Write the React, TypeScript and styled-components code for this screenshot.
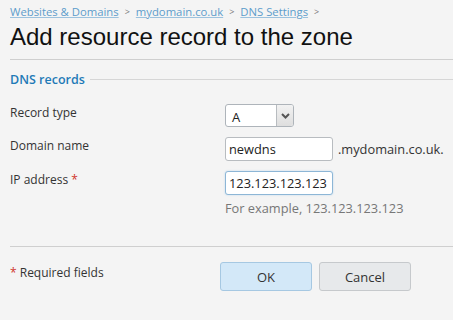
import styled, { createGlobalStyle } from "styled-components";

const GlobalStyle = createGlobalStyle`
  html, body {
    margin: 0;
    padding: 0;
    background: #f4f4f4;
  }
  body {
    font-family: "Open Sans", "Noto Sans", sans-serif;
    font-size: 12px;
    color: #333;
  }
`;

function App() {
  return (
    <>
      <GlobalStyle />
      <Page>
        <Breadcrumbs>
          <Crumb href="#">Websites &amp; Domains</Crumb>
          <Sep>&gt;</Sep>
          <Crumb href="#">mydomain.co.uk</Crumb>
          <Sep>&gt;</Sep>
          <Crumb href="#">DNS Settings</Crumb>
          <Sep>&gt;</Sep>
        </Breadcrumbs>
        <Title>Add resource record to the zone</Title>
        <Section>
          <Legend>DNS records</Legend>
          <Form>
            <Label>Record type</Label>
            <Field>
              <Select>
                <SelectValue>A</SelectValue>
                <SelectArrow>
                  <svg width="9" height="6" viewBox="0 0 9 6">
                    <path d="M1 1l3.5 3.5L8 1" fill="none" stroke="#555" strokeWidth="2" />
                  </svg>
                </SelectArrow>
              </Select>
            </Field>
            <Label>Domain name</Label>
            <Field>
              <Input defaultValue="newdns" />
              <Suffix>.mydomain.co.uk.</Suffix>
            </Field>
            <Label>
              IP address <Req>*</Req>
            </Label>
            <Field $column>
              <Input $focused defaultValue="123.123.123.123" />
              <Hint>For example, 123.123.123.123</Hint>
            </Field>
          </Form>
        </Section>
        <Footer>
          <Required>
            <Req>*</Req> Required fields
          </Required>
          <Buttons>
            <Button $primary>OK</Button>
            <Button>Cancel</Button>
          </Buttons>
        </Footer>
      </Page>
    </>
  );
}

export default App;

const Page = styled.div`
  width: 453px;
  height: 320px;
  padding-left: 10px;
  box-sizing: border-box;
  overflow: hidden;
`;

const Breadcrumbs = styled.div`
  display: flex;
  align-items: center;
  gap: 6px;
  padding-top: 3px;
  height: 16px;
  font-size: 11.3px;
`;

const Crumb = styled.a`
  color: #5d9ccb;
  text-decoration: underline;
  text-decoration-color: #9cc2de;
`;

const Sep = styled.span`
  color: #777;
  font-size: 9px;
`;

const Title = styled.h1`
  margin: 3px 0 0;
  padding-bottom: 7px;
  font-family: "Liberation Sans", Arial, sans-serif;
  font-weight: normal;
  font-size: 24px;
  line-height: 30px;
  color: #111;
  border-bottom: 1px solid #cfcfcf;
`;

const Section = styled.div`
  padding-top: 11px;
`;

const Legend = styled.div`
  display: flex;
  align-items: center;
  gap: 5px;
  font-size: 12.5px;
  font-weight: 600;
  color: #1f7ab7;
  &::after {
    content: "";
    flex: 1;
    border-top: 1px solid #d6d6d6;
  }
`;

const Form = styled.div`
  display: grid;
  grid-template-columns: 215px 1fr;
  row-gap: 10px;
  padding-top: 16px;
  padding-bottom: 29px;
`;

const Label = styled.div`
  padding-top: 1px;
  color: #333;
  line-height: 16px;
`;

const Field = styled.div<{ $column?: boolean }>`
  display: flex;
  flex-direction: ${(p) => (p.$column ? "column" : "row")};
  align-items: ${(p) => (p.$column ? "flex-start" : "center")};
  gap: ${(p) => (p.$column ? "4px" : "5px")};
  font-size: 12.8px;
`;

const Select = styled.div`
  display: flex;
  width: 69px;
  height: 23px;
  box-sizing: border-box;
  border: 1px solid #aeb4ba;
  border-radius: 3px;
  background: #fff;
  overflow: hidden;
`;

const SelectValue = styled.div`
  flex: 1;
  padding: 4px 6px 3px;
  color: #222;
  font-size: 13px;
  line-height: 16px;
`;

const SelectArrow = styled.div`
  width: 16px;
  display: flex;
  align-items: center;
  justify-content: center;
  border-left: 1px solid #b8bcc0;
  background: linear-gradient(#f2f2f2, #dedede);
`;

const Input = styled.input<{ $focused?: boolean }>`
  width: 108px;
  height: 24px;
  box-sizing: border-box;
  padding: 2px 3px;
  border: 1px solid ${(p) => (p.$focused ? "#8db6d6" : "#b8bcc0")};
  border-radius: 3px;
  background: #fff;
  font-family: "Open Sans", "Noto Sans", sans-serif;
  font-size: 12.8px;
  color: #222;
  outline: none;
  box-shadow: ${(p) => (p.$focused ? "0 0 2px #b9d6ec" : "none")};
`;

const Suffix = styled.span`
  color: #333;
`;

const Hint = styled.div`
  color: #777;
`;

const Req = styled.span`
  color: #d0342c;
`;

const Footer = styled.div`
  display: flex;
  align-items: flex-start;
  border-top: 1px solid #cfcfcf;
  padding-top: 15px;
`;

const Required = styled.div`
  width: 210px;
  padding-top: 2px;
`;

const Buttons = styled.div`
  display: flex;
  gap: 7px;
`;

const Button = styled.button<{ $primary?: boolean }>`
  width: 92px;
  height: 29px;
  border-radius: 3px;
  border: 1px solid ${(p) => (p.$primary ? "#a6c8e2" : "#c6c9cc")};
  background: ${(p) => (p.$primary ? "#d3e8f8" : "#e7e9eb")};
  font-family: "Open Sans", "Noto Sans", sans-serif;
  font-size: 13px;
  color: #333;
`;
